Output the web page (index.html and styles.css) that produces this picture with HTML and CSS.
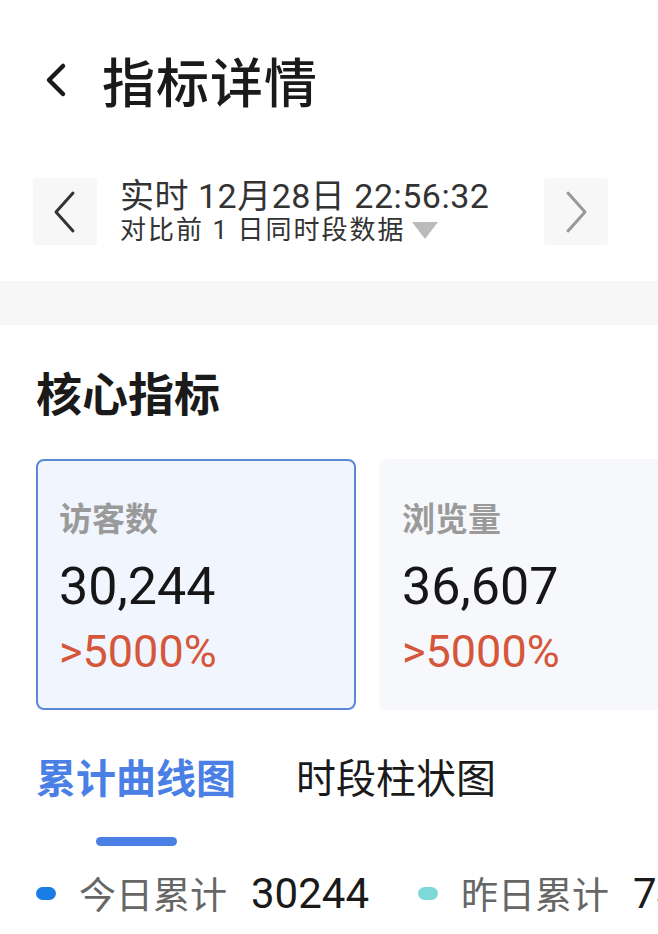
FILE: index.html
```html
<!DOCTYPE html>
<html lang="zh-CN">
<head>
  <meta charset="UTF-8">
  <meta name="viewport" content="width=device-width, initial-scale=1.0">
  <title>指标详情</title>
  <link rel="stylesheet" href="styles.css">
</head>
<body>

  <div class="page">
    <div class="header">
      <svg class="back" width="30" height="36" viewBox="0 0 30 36">
        <path d="M22 4 L8 18 L22 32" fill="none" stroke="#1a1a1a" stroke-width="4.5" stroke-linecap="round" stroke-linejoin="round"/>
      </svg>
      <h1>指标详情</h1>
    </div>

    <div class="date-nav">
      <div class="nav-btn">
        <svg width="28" height="44" viewBox="0 0 28 44">
          <path d="M22 3 L5 22 L22 41" fill="none" stroke="#333" stroke-width="3" stroke-linecap="round" stroke-linejoin="round"/>
        </svg>
      </div>
      <div class="date-info">
        <div class="date-main">实时 12月28日 22:56:32</div>
        <div class="date-sub">对比前 1 日同时段数据 <span class="caret"></span></div>
      </div>
      <div class="nav-btn">
        <svg width="28" height="44" viewBox="0 0 28 44">
          <path d="M6 3 L23 22 L6 41" fill="none" stroke="#999" stroke-width="3" stroke-linecap="round" stroke-linejoin="round"/>
        </svg>
      </div>
    </div>

    <div class="divider"></div>

    <div class="section">
      <h2>核心指标</h2>

      <div class="cards">
        <div class="card active">
          <div class="card-label">访客数</div>
          <div class="card-value">30,244</div>
          <div class="card-rate">&gt;5000%</div>
        </div>
        <div class="card">
          <div class="card-label">浏览量</div>
          <div class="card-value">36,607</div>
          <div class="card-rate">&gt;5000%</div>
        </div>
      </div>

      <div class="tabs">
        <div class="tab selected">累计曲线图</div>
        <div class="tab">时段柱状图</div>
      </div>

      <div class="legend">
        <span class="dot today"></span>
        <span class="legend-label">今日累计</span>
        <span class="legend-value">30244</span>
        <span class="dot yesterday"></span>
        <span class="legend-label">昨日累计</span>
        <span class="legend-value">7482</span>
      </div>
    </div>
  </div>

</body>
</html>
```

FILE: styles.css
```css
/* General */
body {
  margin: 0;
  padding: 0;
  background: #fff;
  font-family: 'Roboto', 'Noto Sans CJK SC', sans-serif;
  color: #1a1a1a;
}

.page {
  width: 658px;
  height: 934px;
  overflow: hidden;
}

/* Header */
.header {
  display: flex;
  align-items: center;
  height: 160px;
  padding-left: 41px;
}

.back {
  margin-right: 31px;
}

h1 {
  margin: 0;
  font-family: 'Noto Sans CJK SC', sans-serif;
  font-size: 53px;
  font-weight: 500;
  letter-spacing: 1px;
  color: #1a1a1a;
}

/* Date switcher */
.date-nav {
  display: flex;
  align-items: center;
  margin-top: 18px;
  padding: 0 50px 0 33px;
}

.nav-btn {
  width: 64px;
  height: 67px;
  background: #f7f7f7;
  border-radius: 4px;
  display: flex;
  align-items: center;
  justify-content: center;
}

.date-info {
  flex: 1;
  padding-left: 23px;
  color: #333;
}

.date-main {
  font-size: 34px;
  line-height: 37px;
  letter-spacing: 0.5px;
}

.date-sub {
  font-size: 26px;
  line-height: 30px;
  letter-spacing: 2px;
  display: flex;
  align-items: center;
}

.caret {
  display: inline-block;
  width: 0;
  height: 0;
  margin-left: 6px;
  border-left: 13px solid transparent;
  border-right: 13px solid transparent;
  border-top: 17px solid #bbb;
}

.divider {
  height: 44px;
  margin-top: 36px;
  background: #f7f7f7;
}

/* Core metrics */
.section {
  padding: 0 0 0 36px;
}

h2 {
  margin: 38px 0 0;
  font-family: 'Noto Sans CJK SC', sans-serif;
  font-size: 46px;
  line-height: 56px;
  font-weight: 700;
}

.cards {
  display: flex;
  gap: 23px;
  margin-top: 40px;
}

.card {
  flex: 0 0 320px;
  height: 251px;
  box-sizing: border-box;
  padding: 38px 0 0 23px;
  border-radius: 8px;
  background: #f7f8fc;
}

.card.active {
  background: #f1f5fd;
  border: 2px solid #5a88d5;
  padding: 36px 0 0 21px;
}

.card-label {
  font-family: 'Noto Sans CJK SC', sans-serif;
  font-size: 33px;
  line-height: 40px;
  font-weight: 700;
  color: #9a9a9a;
}

.card-value {
  margin-top: 20px;
  font-size: 52px;
  line-height: 60px;
  color: #161616;
}

.card-rate {
  margin-top: 10px;
  font-size: 45px;
  line-height: 50px;
  color: #d5573b;
}

/* Tabs */
.tabs {
  display: flex;
  gap: 60px;
  margin-top: 42px;
}

.tab {
  position: relative;
  font-family: 'Noto Sans CJK SC', sans-serif;
  font-size: 40px;
  line-height: 48px;
  color: #1a1a1a;
}

.tab.selected {
  font-weight: 700;
  color: #4a80e6;
}

.tab.selected::after {
  content: "";
  position: absolute;
  left: 50%;
  bottom: -46px;
  width: 81px;
  height: 9px;
  margin-left: -40px;
  border-radius: 5px;
  background: #4a80e6;
}

/* Legend */
.legend {
  display: flex;
  align-items: center;
  margin-top: 66px;
  white-space: nowrap;
}

.dot {
  flex: 0 0 20px;
  width: 20px;
  height: 13px;
  border-radius: 7px;
  margin-right: 23px;
}

.dot.today {
  background: #1a7de6;
}

.dot.yesterday {
  background: #7fd9d9;
  margin-left: 49px;
}

.legend-label {
  font-family: 'Noto Sans CJK SC', sans-serif;
  font-size: 37px;
  color: #666;
  margin-right: 24px;
}

.legend-value {
  font-size: 42px;
  color: #1a1a1a;
}
```
